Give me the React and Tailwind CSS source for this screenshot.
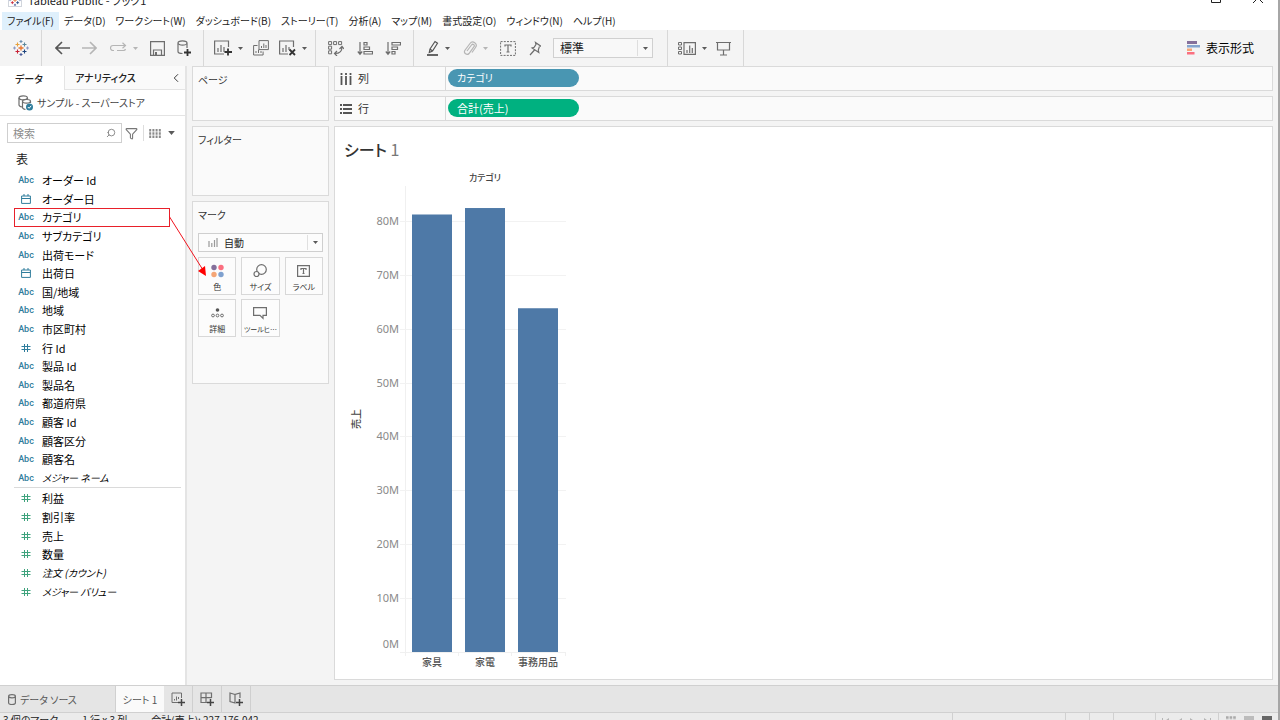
import { ChevronLeft, Search, Filter } from "lucide-react";

const menus = [
  "ファイル(F)",
  "データ(D)",
  "ワークシート(W)",
  "ダッシュボード(B)",
  "ストーリー(T)",
  "分析(A)",
  "マップ(M)",
  "書式設定(O)",
  "ウィンドウ(N)",
  "ヘルプ(H)",
];

const dimensions = [
  { type: "abc", name: "オーダー Id" },
  { type: "date", name: "オーダー日" },
  { type: "abc", name: "カテゴリ", marked: true },
  { type: "abc", name: "サブカテゴリ" },
  { type: "abc", name: "出荷モード" },
  { type: "date", name: "出荷日" },
  { type: "abc", name: "国/地域" },
  { type: "abc", name: "地域" },
  { type: "abc", name: "市区町村" },
  { type: "num", name: "行 Id" },
  { type: "abc", name: "製品 Id" },
  { type: "abc", name: "製品名" },
  { type: "abc", name: "都道府県" },
  { type: "abc", name: "顧客 Id" },
  { type: "abc", name: "顧客区分" },
  { type: "abc", name: "顧客名" },
  { type: "abc", name: "メジャー ネーム", generated: true },
];

const measures = [
  { type: "num", name: "利益" },
  { type: "num", name: "割引率" },
  { type: "num", name: "売上" },
  { type: "num", name: "数量" },
  { type: "num", name: "注文 (カウント)", generated: true },
  { type: "num", name: "メジャー バリュー", generated: true },
];

const bars = [
  { name: "家具", value: 81.2 },
  { name: "家電", value: 82.4 },
  { name: "事務用品", value: 63.8 },
];

function Logo({ size = 16 }) {
  return (
    <svg width={size} height={size} viewBox="0 0 16 16" fill="none" strokeWidth="1.1">
      <path d="M8 5.5v5M5.5 8h5" stroke="#e8762d" strokeWidth="1.3" />
      <path d="M4.5 2.5v4M2.5 4.5h4" stroke="#e8a13c" />
      <path d="M11.5 2.5v4M9.5 4.5h4" stroke="#5b879b" />
      <path d="M4.5 9.5v4M2.5 11.5h4" stroke="#c72035" />
      <path d="M11.5 9.5v4M9.5 11.5h4" stroke="#1f457e" />
      <path d="M8 0v3M6.5 1.5h3" stroke="#6b8fb0" />
      <path d="M8 13v3M6.5 14.5h3" stroke="#4e5f9b" />
      <path d="M1.5 6.5v3M0 8h3M14.5 6.5v3M13 8h3" stroke="#8d9ac4" />
    </svg>
  );
}

function Icon({ children, w = 18, h = 16, color = "#6e6e6e" }) {
  return (
    <svg
      width={w}
      height={h}
      viewBox={`0 0 ${w} ${h}`}
      fill="none"
      stroke={color}
      strokeWidth="1.2"
      className="shrink-0"
    >
      {children}
    </svg>
  );
}

function Caret({ faded, large }) {
  return (
    <svg width={large ? 7 : 5} height={large ? 4 : 3} viewBox="0 0 5 3" className="shrink-0">
      <path d="M0 0h5L2.5 3z" fill={faded ? "#b5b5b5" : "#5a5a5a"} />
    </svg>
  );
}

function ToolButton({ label, children }) {
  return (
    <button aria-label={label} className="flex h-6 shrink-0 items-center gap-1.5">
      {children}
    </button>
  );
}

function TitleBar() {
  return (
    <header className="flex h-3 shrink-0 items-end justify-between overflow-hidden bg-white">
      <div className="flex h-6 items-center gap-1.5 pl-2">
        <span className="border border-gray-300 bg-white">
          <Logo size={12} />
        </span>
        <span className="text-[11px] leading-4">Tableau Public - ブック1</span>
      </div>
      <div className="flex h-7 gap-8 pr-[15px]">
        <button aria-label="最大化" className="flex items-center">
          <Icon w={10} h={10} color="#222">
            <path d="M.5.5h9v9h-9z" strokeWidth="1" />
          </Icon>
        </button>
        <button aria-label="閉じる" className="flex items-center">
          <Icon w={10} h={10} color="#222">
            <path d="M0 0l10 10M10 0L0 10" strokeWidth="1" />
          </Icon>
        </button>
      </div>
    </header>
  );
}

function MenuBar() {
  return (
    <nav className="flex h-[18px] shrink-0 bg-white pl-0.5">
      {menus.map((m, i) => (
        <button
          key={m}
          className={`px-[5px] text-[10px] leading-[18px] whitespace-nowrap ${i === 0 ? "bg-[#dff0fc]" : ""}`}
        >
          {m}
        </button>
      ))}
    </nav>
  );
}

function Toolbar() {
  return (
    <div className="flex h-9 shrink-0 items-stretch">
      <div className="flex w-[42px] shrink-0 items-center border-r border-[#d8d8d8] pl-[13px]">
        <ToolButton label="スタート ページ">
          <Logo />
        </ToolButton>
      </div>

      <div className="flex w-[162px] shrink-0 items-center justify-between border-r border-[#d8d8d8] pr-3 pl-[13px]">
        <ToolButton label="元に戻す">
          <Icon w={15} h={14} color="#555">
            <path d="M15 7H1.5M7 1L1 7l6 6" strokeWidth="1.6" />
          </Icon>
        </ToolButton>
        <ToolButton label="やり直し">
          <Icon w={15} h={14} color="#b5b5b5">
            <path d="M0 7h13.500M8 1l6 6-6 6" strokeWidth="1.6" />
          </Icon>
        </ToolButton>
        <ToolButton label="再生">
          <Icon w={17} h={12} color="#b5b5b5">
            <path d="M4 8.500H3a2.500 2.500 0 010-5h12.500M12.500.8l3 2.700-3 2.700M7 8.500h6.500a2 2 0 002-1.500" />
          </Icon>
          <Caret faded />
        </ToolButton>
        <ToolButton label="保存">
          <Icon w={15} h={15}>
            <path d="M.6.6h13.800v13.800H.6zM3.500 14V9h8v5" />
            <path d="M5 11h2v3H5z" fill="#6e6e6e" stroke="none" />
          </Icon>
        </ToolButton>
        <ToolButton label="新しいデータ ソース">
          <Icon w={14} h={17}>
            <path d="M1 3.500v8c0 1.200 2 2 4.500 2M10 3.500V8" />
            <ellipse cx="5.500" cy="3" rx="4.500" ry="2.200" />
            <path d="M10.500 9v7M7 12.500h7" stroke="#333" strokeWidth="1.800" />
          </Icon>
        </ToolButton>
      </div>

      <div className="flex w-[112px] shrink-0 items-center justify-between border-r border-[#d8d8d8] pr-2 pl-2.5">
        <ToolButton label="新しいワークシート">
          <Icon w={18} h={16}>
            <path d="M14.500 7V1H.6v13H10M4 12V8M7 12V5M10 12V7" />
            <path d="M14 8.500v7M10.500 12H18" stroke="#333" strokeWidth="1.800" />
          </Icon>
          <Caret />
        </ToolButton>
        <ToolButton label="複製">
          <Icon w={16} h={16}>
            <path d="M6 .6h9.400v9H6zM8.500 8V6M10.800 8V3.500M13 8V5M4.500 5.500H.6v9.500h9.500v-3.500M3 13v-2M5.500 13V9.500M8 13v-2" strokeWidth="1" />
          </Icon>
        </ToolButton>
        <ToolButton label="シートのクリア">
          <Icon w={17} h={16}>
            <path d="M14.500 7V1H.6v13H9M4 12V8M7 12V5M10 10V7" />
            <path d="M10.500 9.500l5.500 5.500M16 9.500L10.500 15" stroke="#333" strokeWidth="1.800" />
          </Icon>
          <Caret />
        </ToolButton>
      </div>

      <div className="flex w-[98px] shrink-0 items-center justify-between border-r border-[#d8d8d8] pr-3 pl-3">
        <ToolButton label="行と列の交換">
          <Icon w={16} h={15}>
            <path d="M.6.6h3v3h-3zM5.600.6h3v3h-3zM10.600.6h3v3h-3zM.6 5.200h3v3h-3zM.6 9.800h3v3h-3z" strokeWidth="1" />
            <path d="M14 6c0 4-2.500 6.500-7 6.500M11.500 8L14 5.500 16 8M9 10l-2.500 2.500L9 15" />
          </Icon>
        </ToolButton>
        <ToolButton label="昇順で並べ替え">
          <Icon w={16} h={15}>
            <path d="M3 1v12M.8 10.500L3 13.200l2.200-2.700M7 1.500h3v2.500H7zM7 6h5.500v2.500H7zM7 10.500h8.500V13H7z" />
          </Icon>
        </ToolButton>
        <ToolButton label="降順で並べ替え">
          <Icon w={16} h={15}>
            <path d="M3 1v12M.8 10.500L3 13.200l2.200-2.700M7 1.500h8.500V4H7zM7 6h5.500v2.500H7zM7 10.500h3V13H7z" />
          </Icon>
        </ToolButton>
      </div>

      <div className="flex w-[254px] shrink-0 items-center justify-between border-r border-[#d8d8d8] pr-3.5 pl-3">
        <ToolButton label="ハイライト">
          <Icon w={13} h={16} color="#555">
            <path d="M4 9L9 1.500l2.500 1.700L6.500 11l-3.200 1.500zM4 9l2.500 2" />
            <path d="M1 15h11" strokeWidth="1.800" />
          </Icon>
          <Caret />
        </ToolButton>
        <ToolButton label="メンバーのグループ化">
          <Icon w={14} h={15} color="#b5b5b5">
            <path d="M4 10l4.500-6a1.500 1.500 0 012.500 1.700L6 12.500a2.600 2.600 0 01-4.200-3L7 2.500a3.400 3.400 0 015.500 4L9 11.500" />
          </Icon>
          <Caret faded />
        </ToolButton>
        <ToolButton label="マーク ラベルを表示">
          <Icon w={16} h={15}>
            <path d="M.6.6h14.800v13.800H.6z" strokeDasharray="2 1.200" strokeWidth="1" />
            <path d="M5 5.500V4h6v1.500M8 4v7M6.500 11h3" />
          </Icon>
        </ToolButton>
        <ToolButton label="軸の固定">
          <Icon w={12} h={15}>
            <path d="M6.500 1.500l5 3.500-1.200.8-1 3.200.5 2.500L3 7l2.200-.8L7 3.500zM5.500 9L1 14" />
          </Icon>
        </ToolButton>
        <div className="relative flex">
          <select
            aria-label="表示サイズ"
            className="h-5 w-[100px] appearance-none border border-[#d0d0d0] bg-[#f8f8f8] px-1.5 text-xs leading-4"
          >
            <option>標準</option>
          </select>
          <span className="pointer-events-none absolute inset-y-0.5 right-0 flex w-4 items-center justify-center border-l border-[#dedede]">
            <Caret />
          </span>
        </div>
      </div>

      <div className="flex w-[76px] shrink-0 items-center justify-between border-r border-[#d8d8d8] pr-3 pl-2.5">
        <ToolButton label="カードの表示/非表示">
          <Icon w={18} h={13}>
            <path d="M.5.5h3v2.500h-3zM.5 5h3v2.500h-3zM.5 9.500h3V12h-3z" strokeWidth="1" />
            <path d="M6 .6h11.400v11.800H6zM9 11V8M11.700 11V3.500M14.300 11V6" />
          </Icon>
          <Caret />
        </ToolButton>
        <ToolButton label="プレゼンテーション モード">
          <Icon w={15} h={15}>
            <path d="M0 1.500h15M1.500 1.500V9h12V1.500M7.500 9v5M4 14h7" />
          </Icon>
        </ToolButton>
      </div>

      <button className="ml-auto flex items-center gap-1.5 pr-6 text-xs text-black">
        <svg width="13" height="14" viewBox="0 0 13 14">
          <path d="M0 0h10v3H0z" fill="#85709b" />
          <path d="M0 4h13v2.500H0z" fill="#85a5cf" />
          <path d="M0 7.500h5V10H0z" fill="#f5a676" />
          <path d="M0 11h7.500v2.500H0z" fill="#fb6f80" />
        </svg>
        表示形式
      </button>
    </div>
  );
}

function FieldIcon({ type, measure }) {
  const color = measure ? "#3fa37d" : "#2f7d9c";
  if (type === "abc") {
    return <span className="font-[Roboto] text-[9px] font-medium text-[#2f7d9c]">Abc</span>;
  }
  if (type === "date") {
    return (
      <Icon w={10} h={10} color={color}>
        <path d="M.6 2h8.800v7.400H.6zM.6 4.500h8.800M3 0v2M7 0v2" strokeWidth="1" />
      </Icon>
    );
  }
  return (
    <Icon w={10} h={10} color={color}>
      <path d="M3.500 1v8M6.500 1v8M.5 3.500h9M.5 6.500h9" strokeWidth="1" />
    </Icon>
  );
}

function FieldRow({ field, measure }) {
  return (
    <li
      className={`relative ml-3.5 flex items-center leading-4 text-black ${
        field.marked ? "w-[156px] outline -outline-offset-1 outline-[#e8202a]" : ""
      }`}
    >
      <span className="flex w-6 shrink-0 justify-center">
        <FieldIcon type={field.type} measure={measure} />
      </span>
      <span className={`pl-1 whitespace-nowrap ${field.generated ? "text-[10px] italic" : "text-[11px]"}`}>
        {field.name}
      </span>
      {/* drag hint from the field to the colour shelf */}
      {field.marked && (
        <svg
          width="40"
          height="62"
          viewBox="0 0 40 62"
          className="pointer-events-none absolute top-2 left-[155px] z-10"
        >
          <path d="M0 0l34 54" stroke="#f0141e" />
          <path d="M37 60l-8-5 7-5z" fill="#ff0000" />
        </svg>
      )}
    </li>
  );
}

function DataPane() {
  return (
    <aside className="flex w-[187px] shrink-0 flex-col border-r-2 border-[#e4e4e4] bg-white">
      <div className="flex h-6 shrink-0 text-[10px]">
        <button className="w-16 pr-1.5 font-medium">データ</button>
        <button className="flex flex-1 items-center justify-between border-b border-l border-[#e4e4e4] bg-[#fafafa] pr-0.5 pl-2.5 font-medium">
          アナリティクス
          <ChevronLeft size={14} strokeWidth={1.5} />
        </button>
      </div>

      <div className="flex h-[26px] shrink-0 items-center gap-1 border-b border-[#e4e4e4] pl-[18px] text-[10px] text-[#444]">
        <Icon w={15} h={16}>
          <path d="M1 3v7c0 1 1.500 1.700 3 2M9.500 3v1.500M4.500 6.500v6c0 1 1.500 1.700 3 2M12.500 6.500V8" />
          <ellipse cx="5.200" cy="2.800" rx="4.200" ry="2" />
          <ellipse cx="8.500" cy="6.300" rx="4" ry="1.800" />
          <circle cx="11.500" cy="12" r="3.500" fill="#2f7d9c" stroke="none" />
          <path d="M9.800 12l1.300 1.300 2.100-2.500" stroke="#fff" strokeWidth="1" />
        </Icon>
        サンプル - スーパーストア
      </div>

      <div className="mt-[7px] flex shrink-0 items-center pl-[7px]">
        <div className="relative flex">
          <input
            type="text"
            aria-label="検索"
            placeholder="検索"
            className="h-5 w-[115px] border border-[#cfcfcf] px-[5px] text-[11px] leading-4 placeholder:text-[#8c8c8c]"
          />
          <Search
            size={10}
            strokeWidth={2}
            className="pointer-events-none absolute top-[5px] right-1.5 -scale-x-100 text-[#777]"
          />
        </div>
        <button aria-label="フィルター" className="px-[3px]">
          <Filter size={13} strokeWidth={2} className="text-[#777]" />
        </button>
        <button aria-label="表示" className="ml-0.5 flex h-4 items-center gap-[7px] border-l border-[#ddd] pl-[5px]">
          <Icon w={12} h={9} color="#8a8a8a">
            <path d="M1.200 0v9M4.400 0v9M7.600 0v9M10.800 0v9" strokeWidth="2" strokeDasharray="2.600 .6" />
          </Icon>
          <Caret large />
        </button>
      </div>

      <h2 className="mt-2 h-5 shrink-0 pl-4 text-xs leading-4">表</h2>
      <ul className="grid h-[316px] shrink-0 auto-rows-fr">
        {dimensions.map((f) => (
          <FieldRow key={f.name} field={f} />
        ))}
      </ul>
      <hr className="mr-1 mb-px ml-3.5 border-[#dadada]" />
      <ul className="grid h-28 shrink-0 auto-rows-fr">
        {measures.map((f) => (
          <FieldRow key={f.name} field={f} measure />
        ))}
      </ul>
    </aside>
  );
}

function Card({ title, className = "", children }) {
  return (
    <section className={`border border-[#dadada] bg-[#fafafa] px-[5px] pt-[5px] ${className}`}>
      <h3 className="text-[10px] leading-4 text-[#333]">{title}</h3>
      {children}
    </section>
  );
}

function MarkButton({ label, children }) {
  return (
    <button className="flex h-[38px] flex-col items-center justify-between border border-[#d8d8d8] bg-[#fcfcfc] pt-1.5 pb-px text-[8px] leading-3 whitespace-nowrap text-[#333]">
      {children}
      {label}
    </button>
  );
}

function MarksCard() {
  return (
    <Card title="マーク" className="h-[183px]">
      <div className="relative mt-2.5 flex text-[10px]">
        <span className="pointer-events-none absolute inset-y-0 left-2.5 flex items-center">
          <Icon w={10} h={9} color="#9a9a9a">
            <path d="M1 9V3M3.800 9V5M6.500 9V2M9 9V0" />
          </Icon>
        </span>
        <select
          aria-label="マーク タイプ"
          className="h-[19px] w-full appearance-none border border-[#cfcfcf] bg-[#fcfcfc] pl-[25px] leading-4"
        >
          <option>自動</option>
        </select>
        <span className="pointer-events-none absolute inset-y-0.5 right-0 flex w-4 items-center justify-center border-l border-[#e0e0e0]">
          <Caret />
        </span>
      </div>
      <div className="mt-[5px] grid grid-cols-3 gap-x-[5px] gap-y-1">
        <MarkButton label="色">
          <svg width="13" height="14" viewBox="0 0 13 14">
            <circle cx="3" cy="3.500" r="2.700" fill="#85709b" />
            <circle cx="10" cy="3.500" r="2.700" fill="#fb6f80" />
            <circle cx="3" cy="10.500" r="2.700" fill="#f5a676" />
            <circle cx="10" cy="10.500" r="2.700" fill="#7fa1cf" />
          </svg>
        </MarkButton>
        <MarkButton label="サイズ">
          <Icon w={14} h={14}>
            <circle cx="8.500" cy="5.500" r="4.800" />
            <circle cx="3.500" cy="10" r="2.500" fill="#fcfcfc" />
          </Icon>
        </MarkButton>
        <MarkButton label="ラベル">
          <Icon w={13} h={14}>
            <path d="M.6 1.600h11.800v10.800H.6zM4 6V4.500h5V6M6.500 4.500v5M5.500 9.500h2" />
          </Icon>
        </MarkButton>
        <MarkButton label="詳細">
          <Icon w={13} h={14}>
            <circle cx="6.500" cy="4" r="1.800" fill="#555" stroke="none" />
            <circle cx="2" cy="9.500" r="1.400" strokeWidth="1" />
            <circle cx="6.500" cy="9.500" r="1.400" strokeWidth="1" />
            <circle cx="11" cy="9.500" r="1.400" strokeWidth="1" />
          </Icon>
        </MarkButton>
        <MarkButton label={<span className="text-[7px]">ツールヒ…</span>}>
          <Icon w={14} h={14}>
            <path d="M.6 1.600h12.800v7.800H10v3L7 9.400H.6z" />
          </Icon>
        </MarkButton>
      </div>
    </Card>
  );
}

function Shelf({ label, icon, pill, pillClass }) {
  return (
    <div className="flex h-[25px] items-stretch border border-[#dadada] bg-[#fafafa]">
      <div className="flex w-[111px] items-center gap-1.5 border-r border-[#d8d8d8] pl-[5px] text-[11px] text-[#333]">
        {icon}
        {label}
      </div>
      <button
        className={`m-0.5 h-[18px] w-[131px] rounded-full px-[9px] text-left leading-[18px] text-white ${pillClass}`}
      >
        {pill}
      </button>
    </div>
  );
}

function BarChart() {
  const base = 487;
  const y = (v) => base - v * 5.388;
  return (
    <svg width="240" height="510" viewBox="0 0 240 510" fill="#8a8a8a">
      <text x="149" y="16" textAnchor="middle" fontSize="9" fontWeight="500" fill="#444">
        カテゴリ
      </text>
      <path d="M69.500 21v470M64 487.500h166M122.500 487v4M175.500 487v4M229.500 487v4" stroke="#f0f0f0" />
      {[0, 10, 20, 30, 40, 50, 60, 70, 80].map((t) => (
        <g key={t}>
          {t > 0 && <path d={`M64 ${Math.round(y(t)) + 0.5}h166`} stroke="#f2f2f2" />}
          <text x="63" y={t === 0 ? 483 : y(t) + 4} textAnchor="end" fontSize="11" fontFamily="Noto Sans, sans-serif">
            {t}M
          </text>
        </g>
      ))}
      {bars.map((b, i) => (
        <g key={b.name}>
          <rect x={76 + i * 53} y={y(b.value)} width="40" height={base - y(b.value)} fill="#4e79a7" />
          <text x={96 + i * 53} y="501" textAnchor="middle" fontSize="10" fontWeight="500" fill="#555">
            {b.name}
          </text>
        </g>
      ))}
      <text transform="rotate(-90 24 254)" x="24" y="254" textAnchor="middle" fontSize="10" fontWeight="500" fill="#444">
        売上
      </text>
    </svg>
  );
}

function Workspace() {
  return (
    <main className="flex min-w-0 flex-1 flex-col gap-[5px]">
      <Shelf
        label="列"
        pill="カテゴリ"
        pillClass="bg-[#4996b2] text-[10px]"
        icon={
          <Icon w={12} h={12} color="#555">
            <path d="M1.500 0v2M6 0v2M10.500 0v2M1.500 3v9M6 3v9M10.500 3v9" strokeWidth="1.800" />
          </Icon>
        }
      />
      <Shelf
        label="行"
        pill="合計(売上)"
        pillClass="bg-[#00b180] text-[11px]"
        icon={
          <Icon w={12} h={12} color="#555">
            <path d="M0 2h2M0 6h2M0 10h2M3 2h9M3 6h9M3 10h9" strokeWidth="1.800" />
          </Icon>
        }
      />
      <section className="flex-1 border border-[#dadada] bg-white pl-px">
        <h1 className="h-[38px] pt-2.5 pl-2 text-base leading-6 text-[#333]">
          <span className="font-medium">シート</span> <span className="text-[#777]">1</span>
        </h1>
        <BarChart />
      </section>
    </main>
  );
}

function SheetTabs() {
  const add = "flex w-[29px] items-center justify-center border-r border-[#cfcfcf]";
  return (
    <div className="flex h-[27px] shrink-0 border-t border-[#d0d0d0] bg-[#e5e5e5] text-[10px] text-[#555]">
      <button className="flex w-[116px] items-center gap-1 border-r border-[#d0d0d0] pl-2">
        <Icon w={8} h={11}>
          <path d="M.6 2.500v6.500c0 2 6.800 2 6.800 0V2.500" />
          <ellipse cx="4" cy="2.200" rx="3.400" ry="1.600" />
        </Icon>
        データ ソース
      </button>
      <button className="w-12 bg-[#fafafa]">シート 1</button>
      <button aria-label="新しいワークシート" className={add}>
        <Icon w={14} h={14}>
          <path d="M10.500 6V1H1v9.500h6M3.500 8.500V7M5.500 8.500v-4M7.500 7V5" strokeWidth="1" />
          <path d="M10.500 7v7M7 10.500h7" stroke="#444" strokeWidth="1.500" />
        </Icon>
      </button>
      <button aria-label="新しいダッシュボード" className={add}>
        <Icon w={14} h={14}>
          <path d="M11.500 6V1H1v9.500h6M6 1v9.500M1 5.700h10.500" strokeWidth="1.200" />
          <path d="M10.500 7v7M7 10.500h7" stroke="#444" strokeWidth="1.500" />
        </Icon>
      </button>
      <button aria-label="新しいストーリー" className={add}>
        <Icon w={14} h={14}>
          <path d="M6 2.500L1 1v8.500L6 11V2.500L11 1v5" strokeWidth="1.200" />
          <path d="M10.500 7v7M7 10.500h7" stroke="#444" strokeWidth="1.500" />
        </Icon>
      </button>
    </div>
  );
}

function StatusBar() {
  return (
    <footer className="flex h-2 shrink-0 items-start justify-between overflow-hidden border-t border-[#d0d0d0] bg-[#ebebeb] text-[10px] leading-[14px] text-[#222]">
      <div className="flex gap-6 pl-[3px] whitespace-nowrap">
        <span>3 個のマーク</span>
        <span>1 行 x 3 列</span>
        <span>合計(売上): 227,176,042</span>
      </div>
      <div className="flex h-5 shrink-0">
        <span className="w-[113px] border-l border-[#d0d0d0]" />
        <span className="w-6 border-l border-[#d0d0d0]" />
        <span className="w-6 border-l border-[#d0d0d0]" />
        <span className="w-[42px] border-l border-[#d0d0d0]" />
        <span className="w-[63px] border-l border-[#d0d0d0] pt-1 pl-1.5">
          <Icon w={50} h={8} color="none">
            <path d="M0 1h1v7H0zM7 1v7L2 4.500zM20 1v7l-5-3.500zM28 1v7l5-3.500zM42 1v7l5-3.500zM48 1h1v7h-1z" fill="#b5b5b5" />
          </Icon>
        </span>
        <span className="flex w-[60px] gap-2 border-l border-[#d0d0d0] pt-[3px] pl-[7px]">
          <Icon w={10} h={8} color="#aaa">
            <path d="M0 1.500h10M0 5h10" strokeWidth="2.500" strokeDasharray="2.600 1" />
          </Icon>
          <span className="h-2 w-2.5 bg-[#bcbcbc]" />
          <span className="h-2 w-2.5 bg-[#666]" />
        </span>
      </div>
    </footer>
  );
}

export default function App() {
  return (
    <div className="flex h-screen flex-col overflow-hidden border-r-2 border-[#a6a6a6] bg-[#f4f4f4] font-['Noto_Sans_CJK_JP',sans-serif] text-[#222] [font-feature-settings:'palt']">
      <TitleBar />
      <MenuBar />
      <Toolbar />
      <div className="flex min-h-0 flex-1 gap-[5px] pr-[5px]">
        <DataPane />
        <div className="flex w-[137px] shrink-0 flex-col gap-[5px]">
          <Card title="ページ" className="h-[55px]" />
          <Card title="フィルター" className="h-[70px]" />
          <MarksCard />
        </div>
        <div className="flex min-w-0 flex-1 pb-[5px]">
          <Workspace />
        </div>
      </div>
      <SheetTabs />
      <StatusBar />
    </div>
  );
}
